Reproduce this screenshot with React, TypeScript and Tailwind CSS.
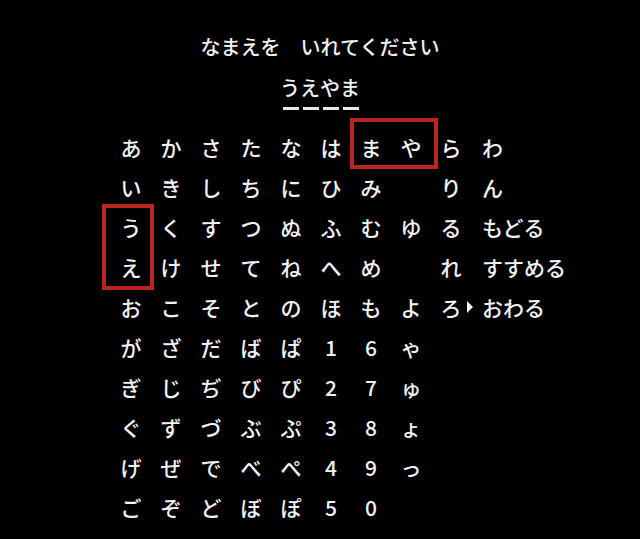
import React from "react";

type Cell = string | null;

const rows: Cell[][] = [
  ["あ", "か", "さ", "た", "な", "は", "ま", "や", "ら", "わ"],
  ["い", "き", "し", "ち", "に", "ひ", "み", null, "り", "ん"],
  ["う", "く", "す", "つ", "ぬ", "ふ", "む", "ゆ", "る", "もどる"],
  ["え", "け", "せ", "て", "ね", "へ", "め", null, "れ", "すすめる"],
  ["お", "こ", "そ", "と", "の", "ほ", "も", "よ", "ろ", "おわる"],
  ["が", "ざ", "だ", "ば", "ぱ", "1", "6", "ゃ", null, null],
  ["ぎ", "じ", "ぢ", "び", "ぴ", "2", "7", "ゅ", null, null],
  ["ぐ", "ず", "づ", "ぶ", "ぷ", "3", "8", "ょ", null, null],
  ["げ", "ぜ", "で", "べ", "ぺ", "4", "9", "っ", null, null],
  ["ご", "ぞ", "ど", "ぼ", "ぽ", "5", "0", null, null, null],
];

const name = ["う", "え", "や", "ま"];

const App: React.FC = () => {
  return (
    <div
      className="relative h-[539px] w-[640px] overflow-hidden bg-black text-[20px] font-medium leading-[20px] text-[#f2f2f2]"
      style={{ fontFamily: '"Noto Sans CJK JP", "Noto Sans", sans-serif' }}
    >
      {/* Title */}
      <div className="flex justify-center pt-[37px]">
        <span className="whitespace-pre">なまえを　いれてください</span>
      </div>

      {/* Name entry */}
      <div className="mt-[21px] flex justify-center">
        {name.map((ch, i) => (
          <span key={i} className="w-[20px] text-center">
            {ch}
          </span>
        ))}
      </div>
      <div className="mt-[9px] flex justify-center gap-[4px] pl-[2px]">
        {name.map((_, i) => (
          <span key={i} className="h-[3px] w-[16px] bg-[#e6e6e6]" />
        ))}
      </div>

      {/* Kana grid */}
      <div className="ml-[111px] mt-[17px] grid grid-cols-[repeat(9,40px)_auto] grid-rows-[repeat(10,40px)] text-[21px]">
        {rows.map((row, r) =>
          row.map((cell, c) => {
            if (c === 9) {
              return (
                <div key={`${r}-${c}`} className="flex items-center pl-[11px]">
                  {cell}
                </div>
              );
            }
            return (
              <div
                key={`${r}-${c}`}
                className="relative flex items-center justify-center"
              >
                {cell}
                {r === 4 && c === 8 && (
                  <svg
                    className="absolute left-[36px] top-[14px]"
                    width="7"
                    height="12"
                    viewBox="0 0 7 12"
                  >
                    <path d="M0 0 L6 6 L0 12 Z" fill="#f2f2f2" />
                  </svg>
                )}
              </div>
            );
          }),
        )}
      </div>

      {/* Selection highlights */}
      <div className="absolute left-[350px] top-[118px] h-[51px] w-[88px] border-4 border-[#b8261e]" />
      <div className="absolute left-[102px] top-[204px] h-[86px] w-[52px] border-4 border-[#b8261e]" />
    </div>
  );
};

export default App;
